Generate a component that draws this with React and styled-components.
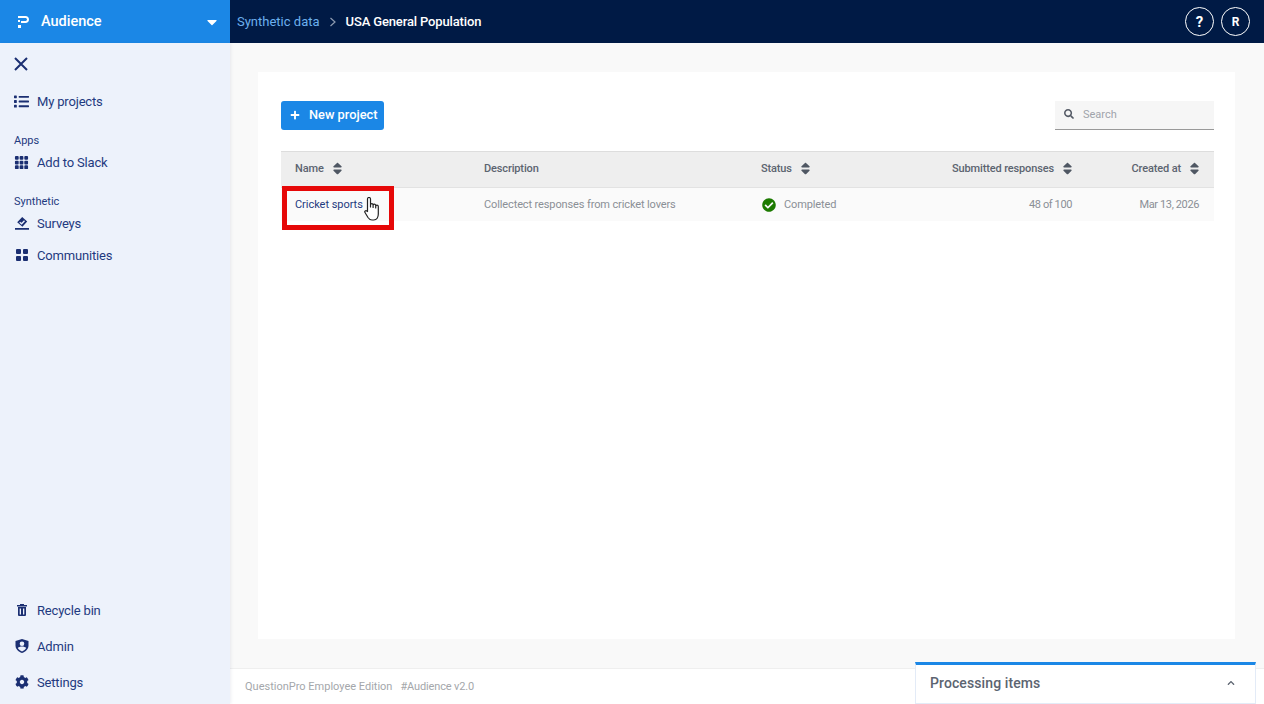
import React from 'react';
import styled, { createGlobalStyle } from 'styled-components';
import { BsGrid3X3GapFill } from 'react-icons/bs';
import { FaCaretDown, FaCheckCircle, FaChevronUp, FaCog, FaList, FaPlus, FaSearch, FaSort } from 'react-icons/fa';

const GlobalStyle = createGlobalStyle`
  html, body {
    margin: 0;
    height: 100%;
    overflow: hidden;
    font-family: Roboto, "Noto Sans", sans-serif;
    background: #f9f9f9;
  }
  * { box-sizing: border-box; }
`;

const Shell = styled.div`
  display: grid;
  grid-template-columns: 230px 1fr;
  grid-template-rows: 43px 1fr;
  width: 1264px;
  height: 704px;
`;

const Brand = styled.div`
  display: flex;
  align-items: center;
  padding: 0 10px 0 18px;
  gap: 12px;
  background: #1b87e6;
  color: #fff;
  font-size: 14.5px;
  font-weight: 500;
  svg:last-child { margin-left: auto; font-size: 16px; }
`;

const TopBar = styled.header`
  display: flex;
  align-items: center;
  padding: 0 14px 0 7px;
  background: #001a45;
  font-size: 13px;
`;

const Crumb = styled.span`
  color: #6cb0ee;
`;

const CrumbSep = styled.span`
  display: flex;
  margin: 0 9px;
  color: #8d9bb0;
`;

const CrumbNow = styled.span`
  color: #fff;
  font-weight: 500;
  letter-spacing: -0.14px;
`;

const TopActions = styled.div`
  display: flex;
  gap: 7px;
  margin-left: auto;
`;

const RoundButton = styled.button`
  width: 29px;
  height: 29px;
  padding: 0;
  border: 1px solid #fff;
  border-radius: 50%;
  background: none;
  color: #fff;
  font: 700 ${p => p.$size}px Roboto, sans-serif;
`;

const Sidebar = styled.nav`
  display: flex;
  flex-direction: column;
  background: #edf2fb;
  box-shadow: 1px 0 3px rgba(20, 40, 90, 0.08);
  color: #1f3a80;
  padding: 14px 0 0 14px;
  height: 661px;
  z-index: 1;
`;

const CloseButton = styled.div`
  display: flex;
  height: 14px;
  margin-bottom: 22px;
  color: #1b2f72;
`;

const NavItem = styled.div`
  display: flex;
  align-items: center;
  gap: 8px;
  height: 16px;
  margin-bottom: ${p => p.$gap || 0}px;
  font-size: 13px;
  letter-spacing: -0.17px;
  white-space: nowrap;
`;

const NavIcon = styled.span`
  display: flex;
  justify-content: center;
  width: 15px;
  color: #1b2f72;
  font-size: ${p => p.$size || 14}px;
`;

const NavLabel = styled.div`
  height: 13px;
  margin-bottom: 7px;
  line-height: 13px;
  font-size: 11px;
`;

const NavBottom = styled.div`
  margin-top: auto;
  padding-bottom: 14px;
`;

const Quad = styled.span`
  display: grid;
  grid-template-columns: 5px 5px;
  gap: 2px;
  i { background: #1b2f72; border-radius: 1px; height: 5px; }
`;

const Main = styled.main`
  display: flex;
  flex-direction: column;
  height: 661px;
`;

const Content = styled.div`
  flex: 1;
  padding: 29px 29px 29px 28px;
`;

const Card = styled.section`
  height: 567px;
  padding: 29px 21px 0 23px;
  background: #fff;
`;

const Toolbar = styled.div`
  display: flex;
  justify-content: space-between;
  align-items: flex-start;
  height: 50px;
`;

const PrimaryButton = styled.button`
  display: flex;
  align-items: center;
  gap: 9px;
  width: 103px;
  height: 29px;
  padding: 0 0 2px 9px;
  border: 0;
  border-radius: 3px;
  background: #1b87e6;
  color: #fff;
  font: 500 12.8px Roboto, sans-serif;
  white-space: nowrap;
  svg { font-size: 10px; }
`;

const SearchBox = styled.div`
  display: flex;
  align-items: center;
  gap: 9px;
  width: 159px;
  height: 29px;
  padding: 0 0 2px 9px;
  background: #f6f6f6;
  border-bottom: 1px solid #999;
  color: #a0a4ab;
  font-size: 11px;
  svg { color: #555b66; font-size: 10px; }
`;

const Row = styled.div`
  display: grid;
  grid-template-columns: 189px 277px 150px 190px 127px;
  align-items: center;
`;

const HeadRow = styled(Row)`
  height: 37px;
  background: #eee;
  border-top: 1px solid #ddd;
  border-bottom: 1px solid #e2e2e2;
`;

const BodyRow = styled(Row)`
  height: 33px;
  background: #fafafa;
`;

const HeadCell = styled.div`
  display: flex;
  align-items: center;
  justify-content: ${p => (p.$right ? 'flex-end' : 'flex-start')};
  gap: 6px;
  padding: 0 ${p => (p.$right ? 12 : 0)}px 2px 14px;
  color: #5c6470;
  font-size: 11px;
  font-weight: 500;
  letter-spacing: -0.14px;
  white-space: nowrap;
  svg { color: #4f5763; font-size: 15px; }
`;

const Cell = styled.div`
  display: flex;
  align-items: center;
  justify-content: ${p => (p.$right ? 'flex-end' : 'flex-start')};
  gap: 8px;
  padding: 0 ${p => (p.$right ? 15 : 0)}px 0 14px;
  color: #8a8f96;
  font-size: 11px;
  letter-spacing: ${p => (p.$right ? -0.38 : -0.12)}px;
  white-space: nowrap;
`;

const StatusIcon = styled(FaCheckCircle)`
  margin-left: 1px;
  color: #1c7a00;
  font-size: 14px;
`;

const NameCell = styled(Cell)`
  position: relative;
  align-self: stretch;
  color: #1f3a80;
  letter-spacing: -0.04px;
`;

const Highlight = styled.span`
  position: absolute;
  left: 1px;
  top: -2px;
  width: 112px;
  height: 44px;
  border: 5px solid #e60808;
`;

const HandCursor = styled.svg`
  position: absolute;
  left: 83px;
  top: 9px;
`;

const Footer = styled.footer`
  display: flex;
  align-items: center;
  gap: 8px;
  height: 36px;
  padding-left: 15px;
  background: #fff;
  border-top: 1px solid #efefef;
  color: #a4a7ab;
  font-size: 11px;
`;

const VersionTag = styled.span`
  letter-spacing: -0.14px;
`;

const ProcessingPanel = styled.aside`
  position: fixed;
  left: 915px;
  bottom: 0;
  display: flex;
  align-items: center;
  justify-content: space-between;
  width: 341px;
  height: 42px;
  padding: 0 20px 2px 14px;
  background: #fff;
  border: 1px solid #e3ebf7;
  border-top: 3px solid #1b87e6;
  color: #5c6470;
  font-size: 14px;
  font-weight: 500;
  letter-spacing: 0.1px;
  svg { font-size: 8px; }
`;

function VoteIcon() {
  return (
    <svg width="14" height="13" viewBox="0 0 14 13">
      <path fill="#1b2f72" d="M7.200 0l5 4.400-4.800 5.400-5.200-4.600zM0 11h14v1.700H0z" />
      <path fill="none" stroke="#edf2fb" strokeWidth="1.300" d="M4.700 5.300l1.900 1.500 2.900-3" />
    </svg>
  );
}

function BinIcon() {
  return (
    <svg width="10" height="12" viewBox="0 0 10 12">
      <path
        fill="#1b2f72"
        fillRule="evenodd"
        d="M3 0h4v1h3v1.500H0V1h3zM1 3h8v8a1 1 0 0 1-1 1H2a1 1 0 0 1-1-1zM2.700 4.500V10.500h1.300V4.500zM6 4.500V10.500h1.300V4.500z"
      />
    </svg>
  );
}

function ShieldIcon() {
  return (
    <svg width="14" height="14" viewBox="0 0 14 14">
      <path fill="#1b2f72" d="M7 0l6.500 2v4.500c0 3.500-2.700 6.300-6.500 7.500C3.200 12.800.5 10 .5 6.500V2z" />
      <circle cx="7" cy="4.800" r="2.300" fill="#edf2fb" />
      <path fill="#edf2fb" d="M2.800 9c1-1 2.500-1.500 4.200-1.500s3.200.5 4.200 1.500c-.8 1.500-2.300 2.700-4.200 3.400C5.100 11.700 3.600 10.500 2.800 9z" />
    </svg>
  );
}

function LogoMark() {
  return (
    <svg width="11" height="12" viewBox="0 0 11 12" fill="#fff">
      <path d="M0 0h7.500C9.600 0 11 1.500 11 3.500S9.600 7 7.500 7H3V5h4.300C8.300 5 9 4.400 9 3.500S8.300 2 7.300 2H0z" />
      <path d="M0 4h2v2H0zM0 9h3v3H0z" />
    </svg>
  );
}

const mainLinks = [
  { label: 'Surveys', icon: <VoteIcon />, gap: 16 },
  { label: 'Communities', icon: <Quad><i /><i /><i /><i /></Quad>, gap: 0 },
];

const bottomLinks = [
  { label: 'Recycle bin', icon: <BinIcon />, gap: 20 },
  { label: 'Admin', icon: <ShieldIcon />, gap: 20 },
  { label: 'Settings', icon: <FaCog />, size: 14, gap: 0 },
];

const columns = [
  { label: 'Name' },
  { label: 'Description', plain: true },
  { label: 'Status' },
  { label: 'Submitted responses', right: true },
  { label: 'Created at', right: true },
];

function SideLink({ item }) {
  return (
    <NavItem $gap={item.gap}>
      <NavIcon $size={item.size}>{item.icon}</NavIcon>
      {item.label}
    </NavItem>
  );
}

export default function App() {
  return (
    <Shell>
      <GlobalStyle />
      <Brand>
        <LogoMark />
        Audience
        <FaCaretDown />
      </Brand>
      <TopBar>
        <Crumb>Synthetic data</Crumb>
        <CrumbSep>
          <svg width="8" height="10" viewBox="0 0 8 10" fill="none" stroke="currentColor" strokeWidth="1.200">
            <path d="M1.500 1l4.500 4-4.500 4" />
          </svg>
        </CrumbSep>
        <CrumbNow>USA General Population</CrumbNow>
        <TopActions>
          <RoundButton $size={15}>?</RoundButton>
          <RoundButton $size={12}>R</RoundButton>
        </TopActions>
      </TopBar>
      <Sidebar>
        <CloseButton>
          <svg width="14" height="14" viewBox="0 0 14 14" stroke="currentColor" strokeWidth="2">
            <path d="M1 1l12 12M13 1L1 13" />
          </svg>
        </CloseButton>
        <SideLink item={{ label: 'My projects', icon: <FaList />, size: 15, gap: 25 }} />
        <NavLabel>Apps</NavLabel>
        <SideLink item={{ label: 'Add to Slack', icon: <BsGrid3X3GapFill />, size: 19, gap: 25 }} />
        <NavLabel>Synthetic</NavLabel>
        {mainLinks.map(item => <SideLink key={item.label} item={item} />)}
        <NavBottom>
          {bottomLinks.map(item => <SideLink key={item.label} item={item} />)}
        </NavBottom>
      </Sidebar>
      <Main>
        <Content>
          <Card>
            <Toolbar>
              <PrimaryButton><FaPlus />New project</PrimaryButton>
              <SearchBox><FaSearch />Search</SearchBox>
            </Toolbar>
            <HeadRow>
              {columns.map(col => (
                <HeadCell key={col.label} $right={col.right}>
                  {col.label}
                  {!col.plain && <FaSort />}
                </HeadCell>
              ))}
            </HeadRow>
            <BodyRow>
              <NameCell>
                Cricket sports
                <Highlight />
                <HandCursor width="17" height="24" viewBox="0 0 17 24" fill="#fff" stroke="#222" strokeWidth="1.200" strokeLinejoin="round">
                  <path d="M3.500 14.500V2a1.500 1.500 0 0 1 3 0v8V8a1.300 1.300 0 0 1 2.600 0v2.500-2a1.300 1.300 0 0 1 2.600 0V11V9.500a1.300 1.300 0 0 1 2.600 0V17c0 3-1.500 6-4.500 6H8c-2 0-3-1-4-2.500L1 15.500c-.8-1.300.8-2.500 2-1.300z" />
                </HandCursor>
              </NameCell>
              <Cell>Collectect responses from cricket lovers</Cell>
              <Cell><StatusIcon />Completed</Cell>
              <Cell $right>48 of 100</Cell>
              <Cell $right>Mar 13, 2026</Cell>
            </BodyRow>
          </Card>
        </Content>
        <Footer>
          <span>QuestionPro Employee Edition</span>
          <VersionTag>#Audience v2.0</VersionTag>
        </Footer>
      </Main>
      <ProcessingPanel>
        Processing items
        <FaChevronUp />
      </ProcessingPanel>
    </Shell>
  );
}
